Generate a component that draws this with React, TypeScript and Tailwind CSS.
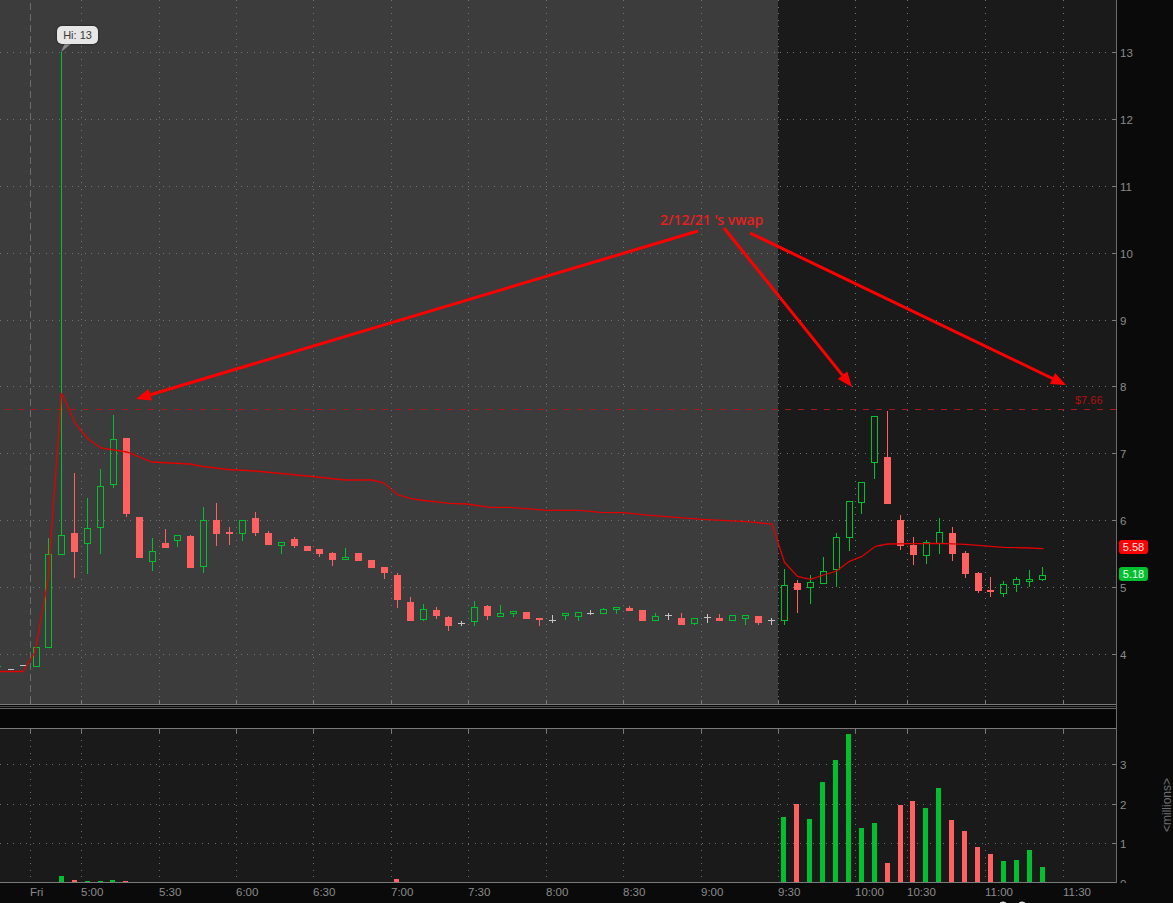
import React from 'react';

type Candle = [number, number, number, number, number, 'g' | 'r' | 'w'];

// x, high, body top, body bottom, low, kind (pixel coordinates of the plot)
const candles: Candle[] = [
  [36, 647, 647, 666, 666, 'g'],
  [48, 538, 554, 647, 647, 'g'],
  [61, 52, 535, 554, 555, 'g'],
  [74, 473, 533, 552, 578, 'r'],
  [87, 498, 528, 543, 574, 'g'],
  [100, 469, 486, 527, 554, 'g'],
  [113, 415, 439, 484, 488, 'g'],
  [126, 438, 438, 514, 517, 'r'],
  [139, 517, 517, 558, 558, 'r'],
  [152, 538, 551, 561, 571, 'g'],
  [165, 529, 543, 548, 548, 'r'],
  [177, 535, 535, 540, 547, 'g'],
  [190, 535, 536, 568, 568, 'r'],
  [203, 507, 520, 566, 573, 'g'],
  [216, 503, 520, 534, 546, 'r'],
  [229, 527, 532, 534, 545, 'r'],
  [242, 520, 520, 533, 541, 'g'],
  [255, 512, 518, 533, 536, 'r'],
  [268, 531, 533, 545, 545, 'r'],
  [281, 542, 542, 545, 554, 'g'],
  [294, 537, 539, 546, 548, 'r'],
  [307, 546, 546, 551, 551, 'r'],
  [319, 549, 549, 554, 557, 'r'],
  [332, 552, 553, 560, 566, 'r'],
  [345, 548, 557, 559, 559, 'g'],
  [358, 553, 553, 561, 561, 'r'],
  [371, 560, 560, 568, 568, 'r'],
  [384, 567, 567, 573, 579, 'r'],
  [397, 573, 575, 600, 608, 'r'],
  [410, 597, 602, 621, 621, 'r'],
  [423, 604, 609, 619, 621, 'g'],
  [436, 607, 610, 616, 619, 'r'],
  [448, 616, 617, 626, 631, 'r'],
  [461, 621, 623, 623, 626, 'w'],
  [474, 601, 607, 621, 626, 'g'],
  [487, 605, 606, 616, 620, 'r'],
  [500, 605, 613, 616, 616, 'g'],
  [513, 611, 611, 613, 617, 'g'],
  [526, 612, 612, 619, 619, 'r'],
  [539, 618, 618, 620, 626, 'r'],
  [552, 615, 620, 620, 623, 'w'],
  [565, 613, 613, 615, 620, 'g'],
  [578, 612, 612, 616, 621, 'g'],
  [590, 610, 613, 613, 615, 'w'],
  [603, 608, 609, 613, 613, 'g'],
  [616, 607, 607, 609, 614, 'g'],
  [629, 606, 608, 611, 611, 'r'],
  [642, 610, 610, 621, 621, 'r'],
  [655, 613, 616, 620, 621, 'g'],
  [668, 613, 615, 615, 620, 'w'],
  [681, 613, 618, 625, 625, 'r'],
  [694, 618, 618, 623, 625, 'g'],
  [707, 614, 617, 617, 623, 'w'],
  [719, 614, 618, 621, 621, 'r'],
  [732, 615, 615, 620, 620, 'g'],
  [745, 615, 615, 618, 625, 'g'],
  [758, 616, 616, 623, 625, 'r'],
  [771, 618, 620, 620, 625, 'w'],
  [784, 569, 585, 620, 625, 'g'],
  [797, 580, 583, 590, 613, 'r'],
  [810, 575, 582, 587, 604, 'g'],
  [823, 557, 571, 583, 584, 'g'],
  [836, 533, 537, 569, 587, 'g'],
  [849, 501, 501, 537, 551, 'g'],
  [861, 482, 482, 502, 514, 'g'],
  [874, 416, 416, 462, 479, 'g'],
  [887, 411, 457, 504, 504, 'r'],
  [900, 515, 520, 546, 550, 'r'],
  [913, 537, 545, 555, 565, 'r'],
  [926, 540, 542, 555, 564, 'g'],
  [939, 518, 532, 543, 554, 'g'],
  [952, 527, 533, 554, 561, 'r'],
  [965, 551, 553, 574, 578, 'r'],
  [978, 572, 573, 591, 593, 'r'],
  [990, 577, 590, 592, 597, 'r'],
  [1003, 581, 584, 593, 597, 'g'],
  [1016, 577, 579, 584, 592, 'g'],
  [1029, 570, 579, 581, 587, 'g'],
  [1042, 567, 575, 579, 581, 'g'],
];

const vwap =
  '0,671.5 23,671.5 35,652 48,580 61.5,393 75,423 88,439 101,448 127,452 152,462 190,464 203,466.5 228,469.5 255,471 281,473.5 307,476 345,480 372,480 384,483 398,495 410,498.3 420,500 450,503.3 467,504 490,507.3 510,507.3 547,510.3 580,510.3 600,512.3 623,512.7 650,515.3 702,519.3 747,521.7 772,524 784.5,562.3 797.5,576.5 810.5,579.3 823.5,575 836.5,571 849.5,561.3 861.5,556.7 875.5,546.3 887.5,544 913.5,543.7 939.5,543.3 965.5,544.3 1003.5,547.3 1030,548 1043.5,548.7';

const priceTicks: [string, number][] = [
  ['13', 52],
  ['12', 119],
  ['11', 186],
  ['10', 253],
  ['9', 320],
  ['8', 386],
  ['7', 453],
  ['6', 520],
  ['5', 587],
  ['4', 654],
];

const gridX = [81, 159, 236, 313, 391, 468, 546, 623, 701, 778, 855, 907, 985, 1063];

const timeLabels: [string, number][] = [
  ['Fri', 30],
  ['5:00', 81],
  ['5:30', 159],
  ['6:00', 236],
  ['6:30', 313],
  ['7:00', 391],
  ['7:30', 468],
  ['8:00', 546],
  ['8:30', 623],
  ['9:00', 701],
  ['9:30', 778],
  ['10:00', 855],
  ['10:30', 907],
  ['11:00', 985],
  ['11:30', 1063],
];

// left edge of bar, top of bar, kind
const volumes: [number, number, 'g' | 'r'][] = [
  [59, 876, 'g'],
  [72, 880, 'r'],
  [85, 881, 'g'],
  [98, 881, 'g'],
  [110, 880, 'g'],
  [123, 881, 'r'],
  [394, 879, 'r'],
  [781, 817, 'g'],
  [794, 804, 'r'],
  [807, 819, 'g'],
  [820, 782, 'g'],
  [833, 760, 'g'],
  [846, 734, 'g'],
  [859, 828, 'g'],
  [872, 823, 'g'],
  [885, 863, 'r'],
  [898, 805, 'r'],
  [910, 801, 'r'],
  [923, 808, 'g'],
  [936, 788, 'g'],
  [949, 820, 'r'],
  [962, 831, 'r'],
  [975, 847, 'r'],
  [988, 854, 'r'],
  [1001, 861, 'g'],
  [1014, 860, 'g'],
  [1027, 850, 'g'],
  [1040, 867, 'g'],
];

const GREEN = '#00c030';
const RED = '#ff6060';

function CandleMark({ c }: { c: Candle }) {
  const [x, hi, top, bot, lo, kind] = c;
  if (kind === 'w') {
    return (
      <g fill="#c4c4c4">
        <rect x={x} y={hi} width={1} height={lo - hi} />
        <rect x={x - 3} y={top} width={7} height={1} />
      </g>
    );
  }
  if (kind === 'r') {
    return (
      <g fill={RED}>
        <rect x={x} y={hi} width={1} height={lo - hi} />
        <rect x={x - 3} y={top} width={7} height={bot - top} />
      </g>
    );
  }
  return (
    <g>
      <rect x={x} y={hi} width={1} height={top - hi} fill={GREEN} />
      <rect x={x} y={bot} width={1} height={lo - bot} fill={GREEN} />
      <rect x={x - 3 + 0.5} y={top + 0.5} width={6} height={bot - top} fill="none" stroke={GREEN} />
    </g>
  );
}

function Arrow({ x1, y1, x2, y2 }: { x1: number; y1: number; x2: number; y2: number }) {
  const a = Math.atan2(y2 - y1, x2 - x1);
  const len = 15;
  const half = 6;
  const bx = x2 - len * Math.cos(a);
  const by = y2 - len * Math.sin(a);
  const nx = -Math.sin(a) * half;
  const ny = Math.cos(a) * half;
  return (
    <g>
      <line x1={x1} y1={y1} x2={bx} y2={by} stroke="#ff0000" strokeWidth={3} />
      <polygon points={`${x2},${y2} ${bx + nx},${by + ny} ${bx - nx},${by - ny}`} fill="#ff0000" />
    </g>
  );
}

function PricePlot() {
  return (
    <div className="relative h-full w-[1117px]">
      <svg width={1117} height={705} className="block">
        <rect x={0} y={0} width={778} height={705} fill="#3c3c3c" />
        <rect x={778} y={0} width={339} height={705} fill="#1a1a1a" />

        <g shapeRendering="crispEdges" strokeWidth={1}>
          {priceTicks.map(([label, y]) => (
            <g key={label}>
              <line x1={0} x2={1112} y1={y + 0.5} y2={y + 0.5} stroke="#727272" strokeDasharray="1 5.5" />
              <line x1={1112} x2={1116} y1={y + 0.5} y2={y + 0.5} stroke="#7a7a7a" />
            </g>
          ))}
          {gridX.map((x) => (
            <line key={x} x1={x + 0.5} x2={x + 0.5} y1={0} y2={700} stroke="#727272" strokeDasharray="1 5.5" />
          ))}
          <line x1={30.5} x2={30.5} y1={3} y2={704} stroke="#6c6c6c" strokeDasharray="7 4" />
          <line x1={5} x2={1116} y1={409.5} y2={409.5} stroke="#a81a1a" strokeDasharray="6 7" />
          {[30, ...gridX].map((x) => (
            <line key={x} x1={x + 0.5} x2={x + 0.5} y1={700} y2={704} stroke="#7a7a7a" />
          ))}
          <rect x={8} y={669} width={6} height={1} fill="#c4c4c4" />
          <rect x={20} y={665} width={7} height={1} fill="#c4c4c4" />
          <rect x={0} y={666} width={1} height={1} fill={GREEN} />
          {candles.map((c) => (
            <CandleMark key={c[0]} c={c} />
          ))}
          <line x1={0} x2={1117} y1={704.5} y2={704.5} stroke="#7a7a7a" />
          <line x1={1116.5} x2={1116.5} y1={0} y2={705} stroke="#6c6c6c" />
        </g>

        <polyline points={vwap} fill="none" stroke="#e00000" strokeWidth={1.3} />

        <Arrow x1={698} y1={231} x2={136} y2={399} />
        <Arrow x1={724} y1={228} x2={852} y2={387} />
        <Arrow x1={750} y1={233} x2={1066} y2={385} />

        <text x={660} y={225} className="fill-[#f01c1c] font-['Noto_Sans',sans-serif] text-[14px] font-medium">
          2/12/21 's vwap
        </text>
        <text x={1075} y={404} className="fill-[#b01010] text-[11px]">
          $7.66
        </text>

        <polygon points="61,52 65,43 72,43" fill="#8c8c8c" />
      </svg>

      {/* high of day callout */}
      <div className="absolute left-[57px] top-[26px] flex h-[18px] w-[41px] items-center justify-center rounded-[5px] bg-[#e6e6e6] text-[11px] text-[#3a3a3a] shadow-[0_0_2px_#111]">
        Hi: 13
      </div>
    </div>
  );
}

function PriceAxis() {
  return (
    <div className="relative h-full flex-1">
      <svg width={56} height={705} className="block">
        {priceTicks.map(([label, y]) => (
          <text key={label} x={3} y={y + 5} className="fill-[#8a8a8a] text-[11.5px]">
            {label}
          </text>
        ))}
      </svg>
      <div className="absolute left-[2px] top-[540px] flex h-[14px] w-[29px] items-center justify-center rounded-[3px] bg-[#ff0000] text-[11px] text-[#ffe6e6]">
        5.58
      </div>
      <div className="absolute left-[2px] top-[567px] flex h-[14px] w-[29px] items-center justify-center rounded-[3px] bg-[#00c030] text-[11px] text-[#eaffea]">
        5.18
      </div>
    </div>
  );
}

function VolumePlot() {
  return (
    <svg width={1117} height={155} viewBox="0 728 1117 155" className="block shrink-0">
      <rect x={0} y={728} width={1117} height={155} fill="#1a1a1a" />
      <g shapeRendering="crispEdges">
        {[764, 804, 843].map((y) => (
          <g key={y}>
            <line x1={0} x2={1112} y1={y + 0.5} y2={y + 0.5} stroke="#6a6a6a" strokeDasharray="1 5.5" />
            <line x1={1112} x2={1116} y1={y + 0.5} y2={y + 0.5} stroke="#7a7a7a" />
          </g>
        ))}
        {[30, ...gridX].map((x) => (
          <g key={x}>
            <line x1={x + 0.5} x2={x + 0.5} y1={733} y2={882} stroke="#6a6a6a" strokeDasharray="1 5.5" />
            <line x1={x + 0.5} x2={x + 0.5} y1={728} y2={733} stroke="#7a7a7a" />
          </g>
        ))}
        {volumes.map(([x, top, kind]) => (
          <rect key={x} x={x} y={top} width={5} height={882 - top} fill={kind === 'g' ? GREEN : RED} />
        ))}
        <line x1={0} x2={1117} y1={728.5} y2={728.5} stroke="#7a7a7a" />
        <line x1={0} x2={1117} y1={882.5} y2={882.5} stroke="#7a7a7a" />
        <line x1={1116.5} x2={1116.5} y1={708} y2={883} stroke="#6c6c6c" />
      </g>
    </svg>
  );
}

function VolumeAxis() {
  return (
    <div className="relative h-full flex-1 overflow-hidden">
      <svg width={56} height={155} viewBox="1117 728 56 155" className="block">
        {[
          ['3', 764],
          ['2', 804],
          ['1', 843],
          ['0', 883],
        ].map(([label, y]) => (
          <text key={label as string} x={1120} y={(y as number) + 5} className="fill-[#8a8a8a] text-[11.5px]">
            {label}
          </text>
        ))}
        <text transform="translate(1171 832) rotate(-90)" className="fill-[#6e6e6e] text-[12px]">
          {'<millions>'}
        </text>
      </svg>
    </div>
  );
}

function TimeAxis() {
  return (
    <svg width={1173} height={20} viewBox="0 883 1173 20" className="block">
      {timeLabels.map(([label, x]) => (
        <text key={label} x={x} y={896} className="fill-[#8a8a8a] text-[11.5px]">
          {label}
        </text>
      ))}
      <ellipse cx={1003} cy={903} rx={3} ry={1.5} fill="#e0e0e0" />
      <ellipse cx={1022} cy={903} rx={3} ry={1.5} fill="#e0e0e0" />
    </svg>
  );
}

export default function App() {
  return (
    <div className="flex h-[903px] w-[1173px] flex-col overflow-hidden bg-[#0a0a0a] font-['Liberation_Sans',Arial,sans-serif]">
      <div className="flex h-[705px]">
        <PricePlot />
        <PriceAxis />
      </div>

      {/* strip between the two panes */}
      <div className="h-[23px] w-[1117px] border-r border-[#6c6c6c] bg-[#060606]">
        <div className="mt-px h-px bg-[#4a4a4a]" />
        <div className="mt-px h-px bg-[#666666]" />
      </div>

      <div className="flex h-[155px]">
        <VolumePlot />
        <VolumeAxis />
      </div>

      <TimeAxis />
    </div>
  );
}
